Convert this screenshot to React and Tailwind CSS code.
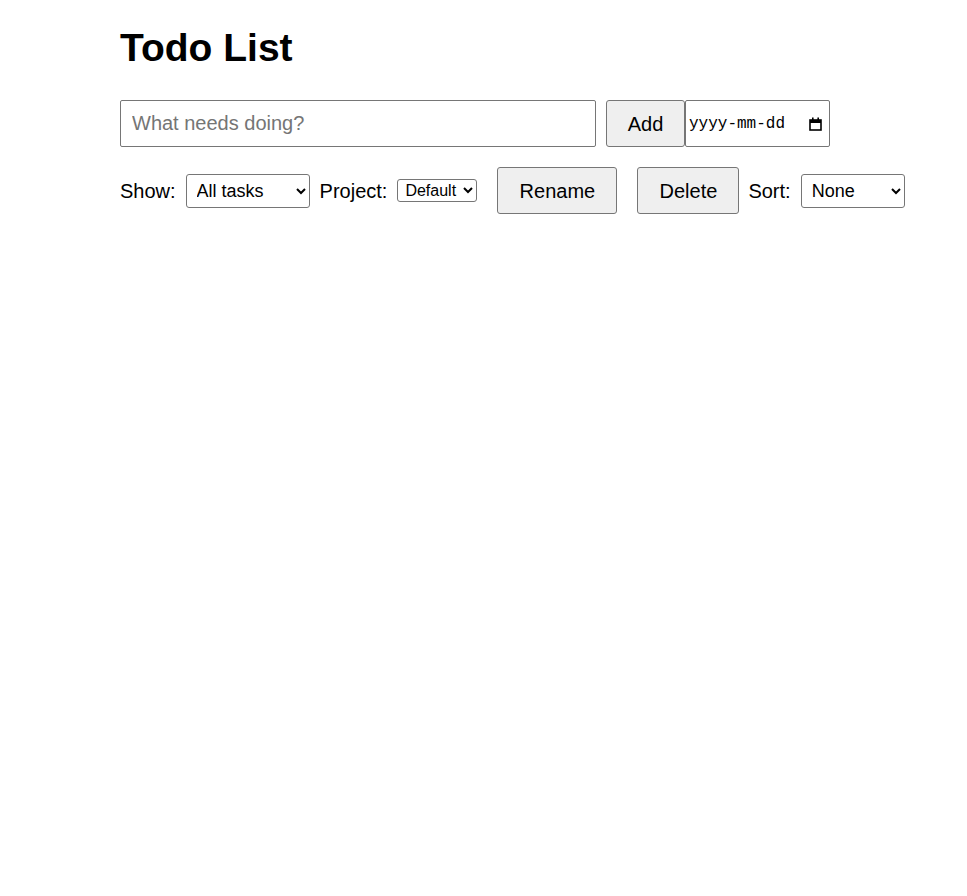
import React, { useState } from 'react';

export default function App() {
    const [text, setText] = useState('');
    const [show, setShow] = useState('all');
    const [project, setProject] = useState('Default');
    const [sort, setSort] = useState('none');

    const btn = 'shrink-0 h-[47px] bg-[#efefef] border border-[#767676] rounded-[3px] text-[20px] text-black';
    const sel = 'shrink-0 border border-[#767676] rounded-[3px] bg-white text-black';

    return (
        <div className="min-h-screen bg-white text-black font-['Liberation_Sans',Arial,sans-serif]">
            <div className="pl-[120px]">
                <h1 className="pt-[26px] text-[39px] leading-[44px] font-bold">Todo List</h1>

                {/* add form */}
                <form className="flex items-center mt-[30px]" onSubmit={(e) => e.preventDefault()}>
                    <input
                        type="text"
                        value={text}
                        onChange={(e) => setText(e.target.value)}
                        placeholder="What needs doing?"
                        className="shrink-0 w-[476px] h-[47px] px-[11px] border border-[#767676] rounded-[2px] text-[20px] placeholder-[#757575] outline-none"
                    />
                    <button type="submit" className={`${btn} ml-[10px] w-[79px]`}>Add</button>
                    <div className="shrink-0 flex items-center justify-between w-[145px] h-[47px] pl-[3px] pr-[7px] border border-[#767676] rounded-[2px] text-[16px] font-['Liberation_Mono',monospace] cursor-text">
                        <span>yyyy-mm-dd</span>
                        <svg width="13" height="14" viewBox="0 0 13 14" className="shrink-0">
                            <rect x="1" y="3" width="11" height="10" fill="none" stroke="black" strokeWidth="1.6" />
                            <rect x="1" y="3" width="11" height="3" fill="black" />
                            <rect x="3" y="0.5" width="1.6" height="3" fill="black" />
                            <rect x="8.4" y="0.5" width="1.6" height="3" fill="black" />
                        </svg>
                    </div>
                </form>

                {/* filters */}
                <div className="flex items-center mt-[20px] text-[20px]">
                    <label className="shrink-0">Show:</label>
                    <select value={show} onChange={(e) => setShow(e.target.value)} className={`${sel} ml-[10px] w-[124px] h-[34px] pl-[6px] text-[18px]`}>
                        <option value="all">All tasks</option>
                        <option value="active">Active</option>
                        <option value="done">Completed</option>
                    </select>
                    <label className="shrink-0 ml-[10px]">Project:</label>
                    <select value={project} onChange={(e) => setProject(e.target.value)} className={`${sel} ml-[10px] w-[80px] h-[23px] pl-[3px] text-[16px]`}>
                        <option>Default</option>
                    </select>
                    <button className={`${btn} ml-[20px] w-[120px]`}>Rename</button>
                    <button className={`${btn} ml-[20px] w-[102px]`}>Delete</button>
                    <label className="shrink-0 ml-[9px]">Sort:</label>
                    <select value={sort} onChange={(e) => setSort(e.target.value)} className={`${sel} ml-[10px] w-[104px] h-[34px] pl-[6px] text-[18px]`}>
                        <option value="none">None</option>
                        <option value="due">Due date</option>
                        <option value="name">Name</option>
                    </select>
                </div>
            </div>
        </div>
    );
}
